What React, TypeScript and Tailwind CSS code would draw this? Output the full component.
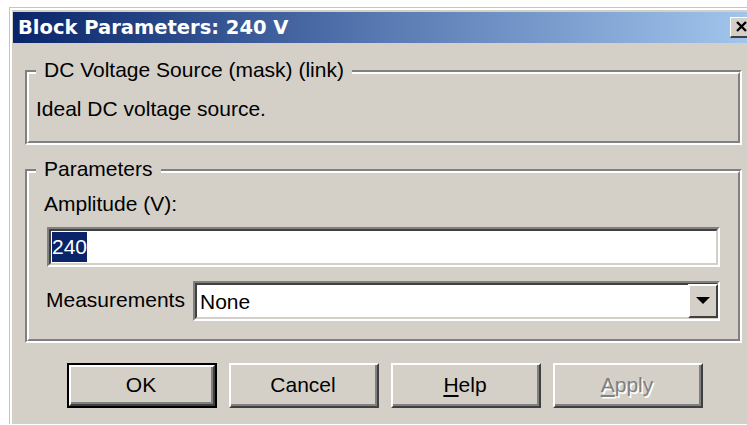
import React from "react";

const ui = "[font-family:'Liberation_Sans',Arial,sans-serif] text-[21px] leading-[24px] text-black";

function GroupBox({ label, className, children }: { label: string; className: string; children: React.ReactNode }) {
  return (
    <div className={`relative border-t-2 border-l-2 border-t-[#808080] border-l-[#808080] border-b-2 border-r-2 border-b-white border-r-white ${className}`}>
      <div className="h-full w-full border-t-2 border-l-2 border-t-white border-l-white border-b-2 border-r-2 border-b-[#808080] border-r-[#808080]">
        {children}
      </div>
      <div className={`absolute left-[9px] top-[-14px] bg-[#d4d0c8] px-[8px] ${ui}`}>{label}</div>
    </div>
  );
}

function Button({ children, primary }: { children: React.ReactNode; primary?: boolean }) {
  return (
    <div className={primary ? "h-[45px] w-[150px] border-2 border-black" : "h-[45px] w-[150px]"}>
      <div className="h-full w-full border-t-2 border-l-2 border-t-white border-l-white border-b-2 border-r-2 border-b-[#404040] border-r-[#404040]">
        <div className="flex h-full w-full items-center justify-center border-b-2 border-r-2 border-b-[#808080] border-r-[#808080]">
          {children}
        </div>
      </div>
    </div>
  );
}

function Sunken({ className, children }: { className: string; children: React.ReactNode }) {
  return (
    <div className={`border-t-2 border-l-2 border-t-[#808080] border-l-[#808080] border-b-2 border-r-2 border-b-white border-r-white ${className}`}>
      <div className="h-full w-full border-t-2 border-l-2 border-t-[#404040] border-l-[#404040] border-b-2 border-r-2 border-b-[#d4d0c8] border-r-[#d4d0c8] bg-white">
        {children}
      </div>
    </div>
  );
}

export default function App() {
  return (
    <div className="h-[425px] w-[747px] overflow-hidden bg-white pl-[9px] pt-[7px]">
      <div className="h-[417px] w-[760px] border-t border-l border-[#c8c4bc]">
        <div className="flex h-full w-full flex-col border-t-2 border-l-2 border-white bg-[#d4d0c8] pt-[2px]">
          {/* title bar */}
          <div className="ml-[1px] flex h-[31px] items-center bg-gradient-to-r from-[#0a246a] via-[#5a7bb3] to-[#a6caf0] pl-[5px]">
            <div className="flex-1 [font-family:'DejaVu_Sans',Verdana,sans-serif] text-[19.5px] font-bold leading-[24px] text-white">
              Block Parameters: 240 V
            </div>
            <div className="mr-[15px] h-[21px] w-[24px] border-t border-l border-white border-b-2 border-r-2 border-b-[#404040] border-r-[#404040] bg-[#d4d0c8]">
              <svg width="21" height="18" viewBox="0 0 21 18" className="block">
                <path d="M6 4 L15 13 M15 4 L6 13" stroke="#000" strokeWidth="2.4" />
              </svg>
            </div>
          </div>

          {/* description */}
          <GroupBox label="DC Voltage Source (mask) (link)" className="ml-[13px] mt-[27px] h-[75px] w-[717px]">
            <div className={`pl-[7px] pt-[23px] ${ui}`}>Ideal DC voltage source.</div>
          </GroupBox>

          {/* parameters */}
          <GroupBox label="Parameters" className="ml-[13px] mt-[24px] h-[174px] w-[717px]">
            <div className="flex flex-col pt-[19px]">
              <div className={`pl-[15px] ${ui}`}>Amplitude (V):</div>
              <Sunken className="ml-[18px] mt-[11px] h-[40px] w-[673px]">
                <div className="flex h-full items-center pl-[1px]">
                  <span className={`bg-[#0a246a] py-[3px] ${ui} text-white`}>240</span>
                </div>
              </Sunken>
              <div className="mt-[14px] flex items-center">
                <div className={`ml-[17px] mb-[3px] w-[147px] ${ui}`}>Measurements</div>
                <Sunken className="h-[40px] w-[527px]">
                  <div className="flex h-full items-center">
                    <div className={`flex-1 pl-[3px] pt-[2px] ${ui}`}>None</div>
                    <div className="mr-[-2px] flex h-[34px] w-[30px] items-center justify-center border-t-2 border-l-2 border-t-white border-l-white border-b-2 border-r-2 border-b-[#404040] border-r-[#404040] bg-[#d4d0c8]">
                      <svg width="14" height="8" viewBox="0 0 14 8">
                        <path d="M0 0 H14 L7 7 Z" fill="#000" />
                      </svg>
                    </div>
                  </div>
                </Sunken>
              </div>
            </div>
          </GroupBox>

          {/* buttons */}
          <div className={`ml-[55px] mt-[20px] flex gap-[12px] ${ui}`}>
            <Button primary>OK</Button>
            <Button>Cancel</Button>
            <Button>
              <span>
                <span className="underline decoration-2 underline-offset-[3px]">H</span>elp
              </span>
            </Button>
            <Button>
              <span className="text-[#808080] [text-shadow:1.5px_1.5px_0_#ffffff]">
                <span className="underline decoration-2 underline-offset-[3px]">A</span>pply
              </span>
            </Button>
          </div>
        </div>
      </div>
    </div>
  );
}
